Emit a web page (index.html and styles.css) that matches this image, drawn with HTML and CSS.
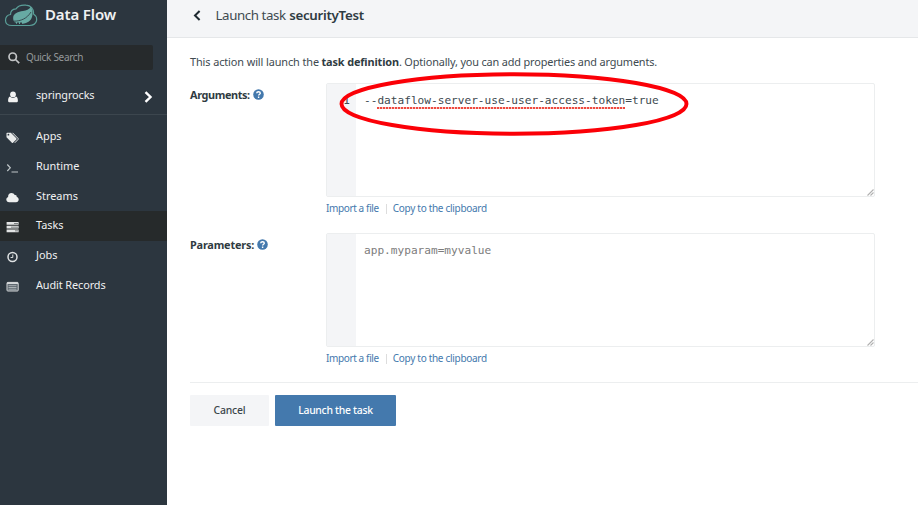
FILE: index.html
```html
<!DOCTYPE html>
<html lang="en">
<head>
<meta charset="utf-8">
<title>Data Flow</title>
<link rel="stylesheet" href="styles.css">
</head>
<body>
<div class="app">
  <aside class="sidebar">
    <div class="brand">
      <svg class="logo" width="34" height="24" viewBox="0 0 34 24"><path d="M8 21.500C3.500 21.500 1.500 19.500 1.500 16.500C1.500 13.500 3.500 11 6.500 10.500C6.500 7 8.500 5 12 4.800C14 1.800 18 .8 22 1.200C27 1.500 30 5 29.500 10C32 11.500 33 14 32.500 17C31.500 20 28.500 21.500 25.500 21.500Z" fill="none" stroke="#5a9e98" stroke-width="1.200"/><path d="M27 2.500C25 5.500 22.500 6.500 19 7C14 7.700 9.700 9.500 9.200 13C8.800 16 10 17.500 11.500 19.500C17 21 23.500 19.500 26.500 16C29.500 12 28.800 6 27 2.500Z" fill="#67aaa3"/><path d="M9.500 17.200C17 17.200 23 14.500 27 8" fill="none" stroke="#2c363f" stroke-width=".8"/><path d="M10 19.300H18" stroke="#2c363f" stroke-width="1.400" stroke-dasharray="2 1"/></svg>
      <span class="brand-name">Data Flow</span>
    </div>
    <div class="search">
      <svg width="12" height="12" viewBox="0 0 12 12" fill="none" stroke="#c3c5c6" stroke-width="1.700"><circle cx="4.700" cy="4.700" r="3.700"/><path d="M7.500 7.500L11.200 11.200"/></svg>
      <span class="search-text">Quick Search</span>
    </div>
    <div class="user">
      <svg width="10" height="12" viewBox="0 0 10 12" fill="#f1f2f2"><circle cx="5" cy="3.400" r="2.900"/><path d="M2 5.600C.6 6 .1 8 .1 9.700C.1 10.700.8 11.200 1.800 11.200H8.200C9.200 11.200 9.900 10.700 9.900 9.700C9.900 8 9.400 6 8 5.600C6.500 7.300 3.500 7.300 2 5.600Z"/></svg>
      <span class="user-name">springrocks</span>
      <svg class="chev" width="9" height="12" viewBox="0 0 9 12" fill="none" stroke="#fff" stroke-width="2.400"><path d="M1.500 1.200L6.500 6L1.500 10.800"/></svg>
    </div>
    <nav class="menu">
      <a class="item"><svg width="13" height="12" viewBox="0 0 13 12"><path d="M.5 1.500Q.5.800 1.200.8H4.800L10.300 6.200Q10.800 6.800 10.300 7.400L7 10.700Q6.400 11.100 5.900 10.700L.5 5.200Z" fill="#e8eaea"/><circle cx="2.400" cy="2.700" r=".9" fill="#2c363f"/><path d="M6.500.8L12 6.400Q12.500 6.900 12 7.500L8.800 10.800" fill="none" stroke="#e8eaea"/></svg><span>Apps</span></a>
      <a class="item"><svg width="13" height="12" viewBox="0 0 13 12" fill="none" stroke="#bfc6c9" stroke-width="1.200"><path d="M1.300 2.500L4.300 5.800L1.300 9M5.500 10H12"/></svg><span>Runtime</span></a>
      <a class="item"><svg width="13" height="12" viewBox="0 0 13 12" fill="#edefef"><path d="M3.200 10.200C1.500 10.200.3 9 .3 7.500C.3 6.300 1 5.400 2.100 5C1.900 2.500 3.500 1 5.500 1C7 1 8.200 1.800 8.700 3.100C10 2.700 11 3.600 10.700 5C12 5.300 12.700 6.300 12.700 7.500C12.700 9 11.600 10.200 10 10.200Z"/></svg><span>Streams</span></a>
      <a class="item active"><svg width="13" height="12" viewBox="0 0 13 12" fill="#e2e4e4"><path d="M.6 1H12.600V3.800H.6ZM.6 4.700H12.600V7.500H.6ZM.6 8.400H12.600V11.200H.6Z"/><path d="M8 2H12V2.800H8ZM5 5.700H12V6.500H5ZM9 9.400H12V10.200H9Z" fill="#5b6061"/></svg><span>Tasks</span></a>
      <a class="item"><svg width="13" height="12" viewBox="0 0 13 12" fill="none" stroke="#dee1e2"><circle cx="6.500" cy="6" r="4.500" stroke-width="1.500"/><path d="M6.800 3.500V6.500H4.600"/></svg><span>Jobs</span></a>
      <a class="item"><svg width="13" height="12" viewBox="0 0 13 12"><rect x="1" y="1.400" width="11.200" height="8.600" rx=".8" fill="#59636a" stroke="#d5d8da"/><path d="M1 2.200H12" stroke="#d5d8da" stroke-width="1.700"/><path d="M2.500 4.700H10.500M2.500 6.500H10.500M2.500 8.200H10.500" stroke="#a9b0b4"/></svg><span class="audit">Audit Records</span></a>
    </nav>
  </aside>
  <main class="main">
    <header class="header">
      <svg width="8" height="11" viewBox="0 0 8 11" fill="none" stroke="#1f2a31" stroke-width="2"><path d="M6.600 1L2 5.500L6.600 10"/></svg>
      <h1 class="title"><span class="title-a">Launch task</span> <b class="title-b">securityTest</b></h1>
    </header>
    <section class="content">
      <p class="intro"><span class="intro-a">This action will launch the</span><b class="intro-b">task definition</b><span class="intro-c">. Optionally, you can add properties and arguments.</span></p>
      <div class="field">
        <div class="label"><b class="label-a">Arguments:</b><svg width="11" height="11" viewBox="0 0 11 11"><circle cx="5.500" cy="5.500" r="5.300" fill="#4479ad"/><path d="M3.700 4.200C3.800 2.200 7.300 2.200 7.300 4.200C7.300 5.300 5.600 5.300 5.600 6.600M5.600 7.500V9" fill="none" stroke="#fff" stroke-width="1.400"/></svg></div>
        <div class="control">
          <div class="editor"><div class="gutter">1</div><div class="code">--<span class="spell">dataflow-server-use-user-access-token</span>=true</div>
            <svg class="grip" width="7" height="7" viewBox="0 0 7 7" stroke="#b0b0b0" stroke-width="1.100"><path d="M.5 6.500L6.500.5M3.500 6.500L6.500 3.500"/></svg></div>
          <div class="links"><a class="import">Import a file</a><i class="bar"></i><a class="copy">Copy to the clipboard</a></div>
        </div>
      </div>
      <div class="field">
        <div class="label"><b>Parameters:</b><svg width="11" height="11" viewBox="0 0 11 11"><circle cx="5.500" cy="5.500" r="5.300" fill="#4479ad"/><path d="M3.700 4.200C3.800 2.200 7.300 2.200 7.300 4.200C7.300 5.300 5.600 5.300 5.600 6.600M5.600 7.500V9" fill="none" stroke="#fff" stroke-width="1.400"/></svg></div>
        <div class="control">
          <div class="editor"><div class="gutter"></div><div class="code placeholder">app.myparam=myvalue</div>
            <svg class="grip" width="7" height="7" viewBox="0 0 7 7" stroke="#b0b0b0" stroke-width="1.100"><path d="M.5 6.500L6.500.5M3.500 6.500L6.500 3.500"/></svg></div>
          <div class="links"><a class="import">Import a file</a><i class="bar"></i><a class="copy">Copy to the clipboard</a></div>
        </div>
      </div>
      <div class="actions"><button class="btn cancel"><span>Cancel</span></button><button class="btn primary"><span>Launch the task</span></button></div>
    </section>
  </main>
</div>
<svg class="callout" width="352" height="68" viewBox="0 0 352 68"><ellipse cx="176" cy="34" rx="172.500" ry="29.700" fill="none" stroke="#fb0007" stroke-width="3.900"/></svg>
</body>
</html>
```
FILE: styles.css
```css
* { box-sizing: border-box; }
body { margin: 0; background: #fff; font: 10.9px/16px "Noto Sans", sans-serif; color: #404a50; overflow: hidden; }
svg { display: block; flex: none; }
span, b, a { white-space: nowrap; }
.app { display: flex; height: 505px; }
.sidebar { width: 167px; background: #2c363f; color: #f0f1f2; flex: none; }
.brand { height: 45px; display: flex; padding: 4px 0 0 4px; gap: 7px; }
.brand-name { font-size: 15px; font-weight: 600; line-height: 21px; letter-spacing: -.13px; }
.search { width: 153px; height: 25px; background: #262a2c; border-radius: 0 2px 2px 0; display: flex; align-items: center; padding-left: 8px; gap: 6px; color: #94989a; font-size: 10px; }
.search-text { letter-spacing: -.32px; margin-top: -2px; }
.user { height: 45px; display: flex; padding: 18px 0 0 8px; border-bottom: 1px solid #3c464e; }
.user svg { margin-top: 3px; }
.user-name { margin: -1px 0 0 18px; width: 90px; flex: none; letter-spacing: -.12px; }
.user .chev { margin-left: 18px; }
.menu { padding-top: 7px; }
.item { display: flex; height: 29.8px; padding: 6px 0 0 6px; gap: 17px; }
.item svg { margin-top: 4px; }
.active { background: #262a2b; }
.audit { letter-spacing: -.1px; }
.main { flex: 1; min-width: 0; }
.header { height: 38px; background: #f4f5f7; border-bottom: 1px solid #e5e7e9; display: flex; padding: 10px 0 0 26px; gap: 14.5px; }
.title { margin: -5px 0 0; font-size: 13.3px; line-height: 20px; font-weight: 400; display: flex; gap: 3.5px; }
.title-a { letter-spacing: -.4px; }
.title b { font-weight: 600; letter-spacing: -.3px; }
.content { padding: 16px 0 0 23px; }
.intro { margin: 0; height: 29px; display: flex; }
.intro-a { letter-spacing: -.1px; }
.intro .intro-b { margin-left: 2.5px; letter-spacing: -.13px; }
.intro-c { letter-spacing: -.15px; }
b { font-weight: 700; color: #2f3b42; }
.field { display: flex; height: 150px; }
.label { width: 136px; display: flex; gap: 3px; padding-top: 4px; letter-spacing: -.2px; }
.label-a { letter-spacing: -.4px; }
.label svg { margin-top: 2px; }
.editor { width: 549px; height: 114px; border: 1px solid #eceeef; border-radius: 2px; display: flex; position: relative; }
.gutter { width: 29px; background: #f4f5f7; text-align: right; padding: 8px 6px 0 0; font: 11.100px/17px "DejaVu Sans Mono", monospace; }
.code { padding: 8px 0 0 8px; font: 11.140px/17px "DejaVu Sans Mono", monospace; }
.spell { background: repeating-linear-gradient(90deg, #ee4a40 0 2px, #fbc9c5 2px 3px) 0 100% / 100% 2px no-repeat; padding-bottom: 2px; }
.placeholder { color: #7c7c7c; }
.grip { position: absolute; right: 0; bottom: 0; }
.links { display: flex; padding-top: 4px; color: #4479ad; font-size: 10px; line-height: 15px; align-items: center; }
.import { letter-spacing: -.38px; }
.copy { letter-spacing: -.3px; }
.bar { width: 1px; height: 10px; background: #ddd; margin: 0 6px 0 7px; }
.actions { border-top: 1px solid #eceeef; width: 728px; display: flex; gap: 6px; padding-top: 12px; margin-top: -1px; }
.btn { border: 0; border-radius: 1px; height: 31px; padding: 0 0 1px; background: #f4f5f7; color: #3b454b; font: 500 10.400px/16px "Noto Sans", sans-serif; width: 79px; letter-spacing: -.15px; }
.primary { width: 121px; background: #4479ad; color: #fff; letter-spacing: -.28px; }
.callout { position: absolute; left: 338px; top: 70px; pointer-events: none; }
```
